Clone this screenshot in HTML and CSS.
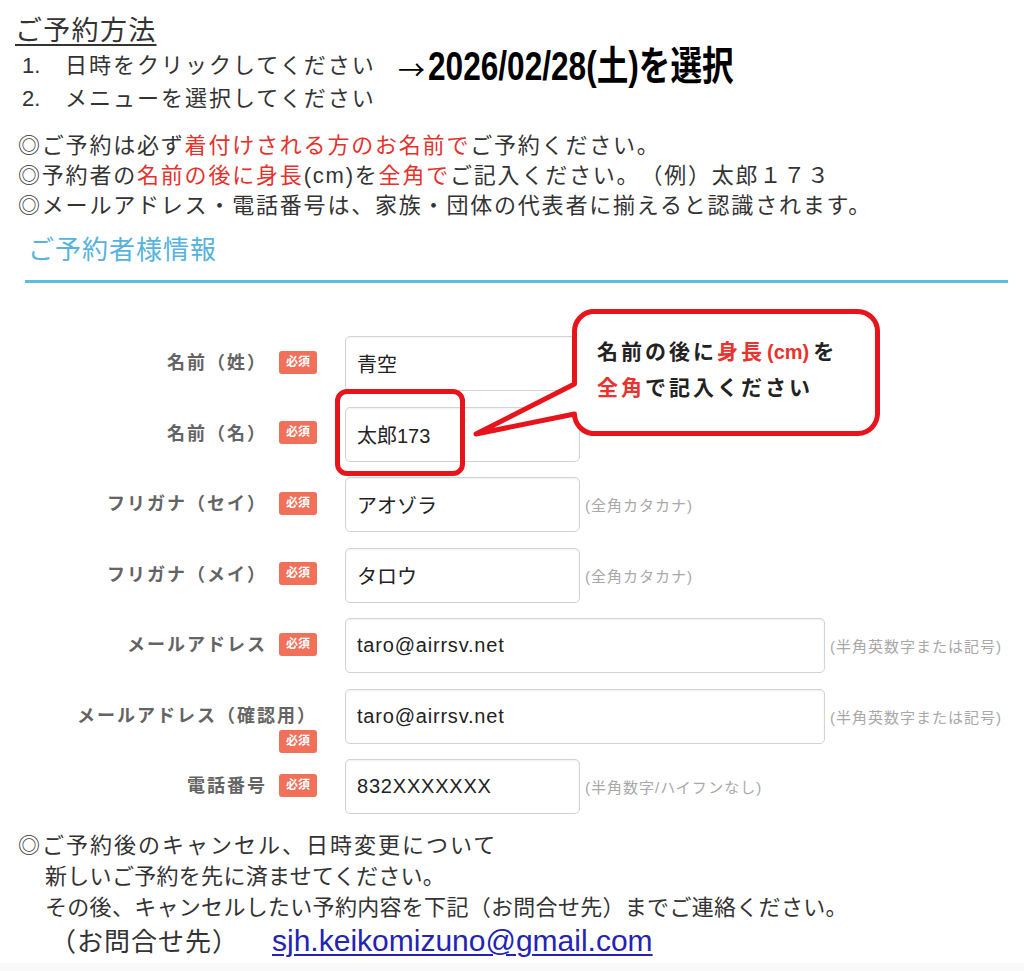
FILE: index.html
```html
<!DOCTYPE html>
<html lang="ja">
<head>
<meta charset="utf-8">
<title>ご予約方法</title>
<link rel="stylesheet" href="styles.css">
</head>
<body>
<div class="page">
  <section class="howto">
    <h2 class="howto-title">ご予約方法</h2>
    <ol class="steps">
      <li class="step"><span class="num">1.</span>日時をクリックしてください<span class="date-note"><span class="arrow">→</span><span class="date-text">2026/02/28(土)を選択</span></span></li>
      <li class="step"><span class="num">2.</span>メニューを選択してください</li>
    </ol>
  </section>

  <div class="notes">
    <p>◎ご予約は必ず<em>着付けされる方のお名前で</em>ご予約ください。</p>
    <p>◎予約者の<em>名前の後に身長</em>(cm)を<em>全角で</em>ご記入ください。（例）太郎１７３</p>
    <p>◎メールアドレス・電話番号は、家族・団体の代表者に揃えると認識されます。</p>
  </div>

  <div class="section-head"><h3>ご予約者様情報</h3></div>

  <div class="form">
    <div class="label">名前（姓）<wbr><span class="badge">必須</span></div>
    <div class="field"><div class="input short">青空</div></div>

    <div class="label">名前（名）<wbr><span class="badge">必須</span></div>
    <div class="field"><div class="input short">太郎173</div><div class="highlight"></div></div>

    <div class="label">フリガナ（セイ）<wbr><span class="badge">必須</span></div>
    <div class="field"><div class="input short">アオゾラ</div><span class="hint">(全角カタカナ)</span></div>

    <div class="label">フリガナ（メイ）<wbr><span class="badge">必須</span></div>
    <div class="field"><div class="input short">タロウ</div><span class="hint">(全角カタカナ)</span></div>

    <div class="label">メールアドレス<wbr><span class="badge">必須</span></div>
    <div class="field"><div class="input long latin">taro@airrsv.net</div><span class="hint">(半角英数字または記号)</span></div>

    <div class="label">メールアドレス（確認用）<wbr><span class="badge">必須</span></div>
    <div class="field"><div class="input long latin">taro@airrsv.net</div><span class="hint">(半角英数字または記号)</span></div>

    <div class="label">電話番号<wbr><span class="badge">必須</span></div>
    <div class="field"><div class="input short latin">832XXXXXXX</div><span class="hint">(半角数字/ハイフンなし)</span></div>

    <div class="callout">
      <svg class="callout-shape" width="415" height="137" viewBox="0 0 415 137">
        <path d="M122,7.5 H388 A20,20 0 0 1 407.5,27 V110 A20,20 0 0 1 388,129.5 H122 A20,20 0 0 1 104.5,110 V110 L6,130 L104.5,80 V27 A20,20 0 0 1 122,7.5 Z" fill="#fff" stroke="#e8141c" stroke-width="5" stroke-linejoin="round"/>
      </svg>
      <div class="callout-text">
        <div>名前の後に<span class="red">身長<span class="cm">(cm)</span></span>を</div>
        <div><span class="red">全角</span>で記入ください</div>
      </div>
    </div>
  </div>

  <div class="footer">
    <p class="lead">◎ご予約後のキャンセル、日時変更について</p>
    <p class="indent">新しいご予約を先に済ませてください。</p>
    <p class="indent">その後、キャンセルしたい予約内容を下記（お問合せ先）までご連絡ください。</p>
    <p class="contact">（お問合せ先）<a href="mailto:sjh.keikomizuno@gmail.com">sjh.keikomizuno@gmail.com</a></p>
  </div>
  <div class="bottom-strip"></div>
</div>
</body>
</html>
```

FILE: styles.css
```css
html, body {
  margin: 0;
  padding: 0;
  background: #fff;
}

body {
  font-family: "Liberation Sans", "Noto Sans CJK JP", sans-serif;
  color: #333;
  text-spacing-trim: space-all;
}

.page {
  width: 1024px;
  height: 971px;
  overflow: hidden;
  position: relative;
}

/* ---------- how to ---------- */
.howto {
  padding: 15px 0 0 15px;
}

.howto-title {
  margin: 0;
  display: inline-block;
  font-size: 27px;
  font-weight: normal;
  line-height: 32px;
  letter-spacing: 1.3px;
  text-decoration: underline;
  text-decoration-thickness: 2px;
  text-underline-offset: 4px;
}

.steps {
  list-style: none;
  margin: 2px 0 0 7px;
  padding: 0;
}

.step {
  position: relative;
  font-size: 22px;
  line-height: 33px;
  letter-spacing: 2px;
}

.num {
  display: inline-block;
  width: 43px;
  letter-spacing: 0;
}

.date-note {
  position: absolute;
  left: 376px;
  top: -3px;
  display: flex;
  align-items: center;
  height: 40px;
  color: #000;
  letter-spacing: 0;
  white-space: nowrap;
}

.arrow {
  font-family: "Noto Sans CJK JP", sans-serif;
  font-size: 27px;
  line-height: 40px;
  font-weight: normal;
  position: relative;
  top: 3px;
}

.date-text {
  display: inline-block;
  font-size: 40px;
  line-height: 40px;
  font-weight: bold;
  transform: scaleX(0.79);
  transform-origin: left center;
  margin-left: 3px;
}

/* ---------- notes ---------- */
.notes {
  margin: 16px 0 0 18px;
  font-size: 22px;
  line-height: 30px;
  letter-spacing: 1.8px;
}

.notes p {
  margin: 0;
}

.notes em {
  font-style: normal;
  color: #e5322d;
}

/* ---------- section head ---------- */
.section-head {
  margin: 13px 16px 0 25px;
  padding: 0 0 14px 3px;
  border-bottom: 3px solid #5bbde4;
}

.section-head h3 {
  margin: 0;
  font-size: 26px;
  font-weight: normal;
  line-height: 32px;
  letter-spacing: 1px;
  color: #55b3dd;
}

/* ---------- form ---------- */
.form {
  position: relative;
  margin: 53px 0 0 60px;
  display: grid;
  grid-template-columns: 257px 1fr;
  grid-auto-rows: 55px;
  column-gap: 28px;
  row-gap: 15.5px;
}

.label {
  text-align: right;
  padding-top: 14px;
  font-size: 18px;
  line-height: 27px;
  font-weight: bold;
  color: #646464;
  letter-spacing: 2px;
}

.badge {
  display: inline-block;
  width: 38px;
  height: 23px;
  margin-left: 12px;
  border-radius: 3px;
  background: #f0705a;
  color: #fff;
  font-size: 12px;
  line-height: 23px;
  font-weight: bold;
  text-align: center;
  letter-spacing: 0;
  vertical-align: middle;
  position: relative;
  top: -2px;
}

.field {
  position: relative;
  display: flex;
  align-items: center;
  gap: 5px;
}

.input {
  box-sizing: border-box;
  height: 55px;
  display: flex;
  align-items: center;
  padding-left: 11px;
  border: 1px solid #d3d3d3;
  border-radius: 5px;
  background: #fff;
  box-shadow: inset 0 1px 2px rgba(0, 0, 0, 0.06);
  font-size: 20px;
  color: #222;
}

.input.latin {
  letter-spacing: 0.8px;
}

.input.short {
  width: 235px;
}

.input.long {
  width: 480px;
}

.hint {
  font-size: 15px;
  letter-spacing: 1px;
  color: #a8a8a8;
  white-space: nowrap;
}

.highlight {
  position: absolute;
  left: -10px;
  top: -17.5px;
  width: 130px;
  height: 87px;
  box-sizing: border-box;
  border: 5px solid #e8141c;
  border-radius: 12px;
}

/* ---------- callout ---------- */
.callout {
  position: absolute;
  left: 410px;
  top: -32px;
  width: 415px;
  height: 137px;
}

.callout-shape {
  position: absolute;
  left: 0;
  top: 0;
}

.callout-text {
  position: absolute;
  left: 127px;
  top: 30px;
  font-size: 21px;
  line-height: 36px;
  font-weight: bold;
  letter-spacing: 3px;
  color: #222;
  white-space: nowrap;
}

.callout-text .red {
  color: #e8332f;
}

.callout-text .cm {
  font-family: "Liberation Sans Narrow", "Liberation Sans", sans-serif;
  font-size: 20px;
  letter-spacing: 0;
  margin: 0 4px 0 2px;
}

/* ---------- footer ---------- */
.footer {
  margin: 16px 0 0 18px;
  font-size: 22px;
  line-height: 31px;
  letter-spacing: 0.3px;
}

.footer p {
  margin: 0;
}

.footer .lead {
  letter-spacing: 2px;
}

.footer .indent {
  padding-left: 27px;
}

.footer .contact {
  padding-left: 32px;
  font-size: 26px;
  line-height: 36px;
  letter-spacing: 1px;
}

.contact a {
  margin-left: 33px;
  font-size: 30px;
  letter-spacing: 0;
  color: #2323b4;
  text-decoration: underline;
  text-decoration-thickness: 2px;
  text-underline-offset: 3px;
}

.bottom-strip {
  margin-top: 3px;
  height: 20px;
  background: #f9f9f9;
}
```
